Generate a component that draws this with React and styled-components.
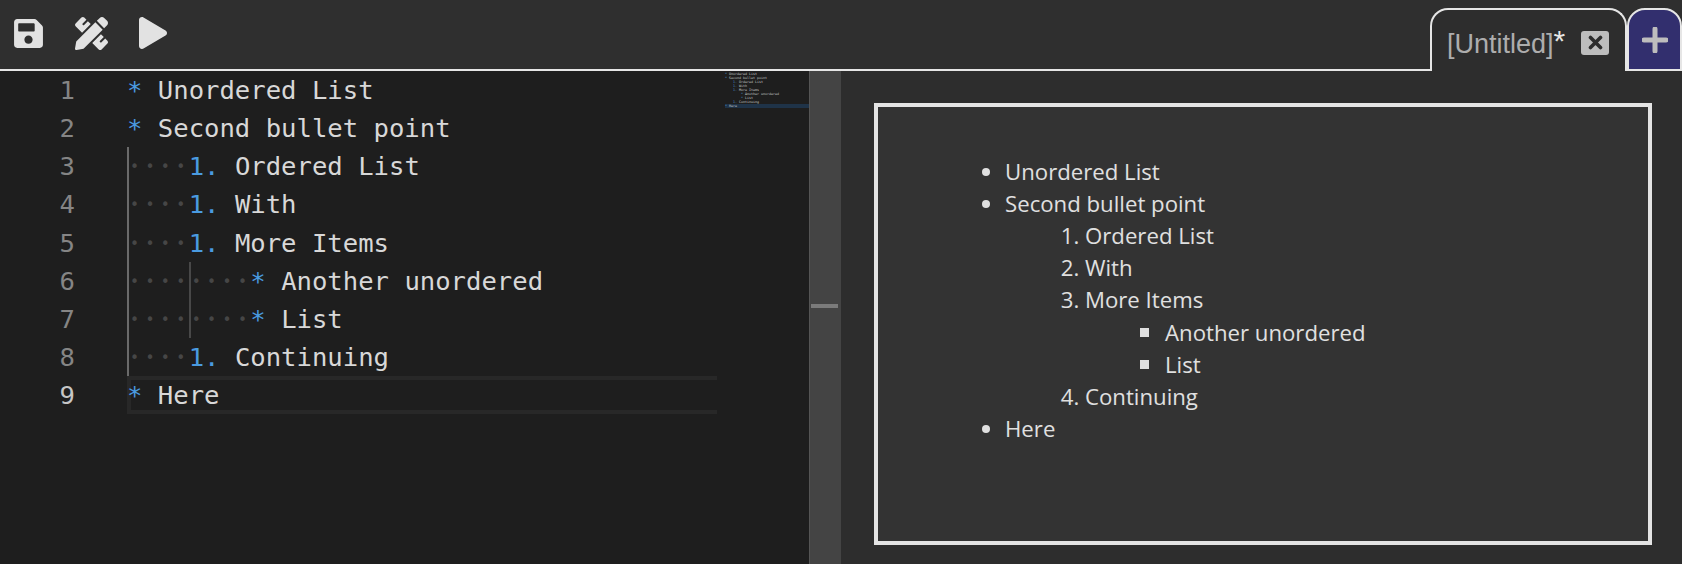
import React from "react";
import styled, { createGlobalStyle } from "styled-components";
import { FaSave, FaPencilRuler, FaPlay } from "react-icons/fa";

const Global = createGlobalStyle`
  html, body { margin: 0; padding: 0; background: #2d2d2d; overflow: hidden; }
`;
const Page = styled.div`
  width: 1682px; height: 564px; display: flex; flex-direction: column; overflow: hidden;
`;
const TopBar = styled.header`
  height: 71px; flex: none; box-sizing: border-box; background: #2f2f2f;
  display: flex; justify-content: space-between; align-items: flex-end;
`;
const Tools = styled.div`
  align-self: stretch; flex: 1; height: 69px; box-sizing: content-box; border-bottom: 2px solid #e6e6e6;
  display: flex; align-items: center; gap: 29.5px; padding-left: 12px; color: #e2e2e2;
  svg { display: block; margin-top: -3px; }
`;
const Tabs = styled.div`
  display: flex; align-items: flex-end; height: 63px;
`;
const Tab = styled.div`
  width: 197px; height: 63px; box-sizing: border-box; border: 2px solid #e6e6e6; border-bottom: none;
  border-radius: 18px 18px 0 0; background: #2d2d2d;
  display: flex; align-items: center; padding: 4px 16px 0 15px; gap: 14px;
  font: 27px/1 "Liberation Sans", Arial, sans-serif; color: #adadad;
`;
const TabTitle = styled.span`
  white-space: nowrap; flex: 1; margin-top: -2px;
`;
const Star = styled.span`
  color: #e6e6e6; font-size: 30px; vertical-align: 2px;
`;
const CloseBtn = styled.span`
  width: 28px; height: 24px; background: #bdbdbd; border-radius: 3px; flex: none;
  display: flex; align-items: center; justify-content: center;
`;
const AddTab = styled.div`
  width: 55px; height: 63px; box-sizing: border-box; border: 2px solid #e6e6e6;
  border-radius: 18px 18px 0 0; background: #322f6e;
  display: flex; align-items: center; justify-content: center;
`;
const Body = styled.main`
  flex: 1; display: flex; min-height: 0;
`;
const Editor = styled.section`
  width: 809px; flex: none; background: #1e1e1e; display: flex;
`;
const Gutter = styled.div`
  width: 127px; flex: none; box-sizing: border-box; padding-right: 52px; text-align: right;
`;
const LineNo = styled.div`
  height: 38.125px; font: 25.6px/38px "DejaVu Sans Mono", monospace;
  color: ${p => (p.$active ? "#c6c6c6" : "#858585")};
`;
const Code = styled.div`
  width: 590px; flex: none;
  font: 25.6px/38px "DejaVu Sans Mono", monospace; color: #d8d8d8; white-space: pre;
`;
const Line = styled.div`
  height: 38.125px; box-sizing: border-box;
  ${p => p.$current && `
    border: solid #282828; border-width: 4px 0 4px 4px;
    line-height: 30px; text-indent: -4px;
  `}
`;
const Guide = styled.div`
  background: linear-gradient(#6a6a6a, #6a6a6a) 0 0 / 2px 100% no-repeat;
`;
const NestedGuide = styled.div`
  background: linear-gradient(#484848, #484848) 62px 0 / 2px 100% no-repeat;
`;
const Mark = styled.span`
  color: #4a9be0;
`;
const Dots = styled.span`
  color: #464646; font-size: 15px; letter-spacing: 6.38px; vertical-align: 3px;
  padding-left: 3px; margin-right: -3px;
`;
const Minimap = styled.div`
  flex: 1; margin-left: 8px; padding-top: 1px; font: 3.33px/4px "DejaVu Sans Mono", monospace; color: #c8c8c8; white-space: pre;
`;
const MiniLine = styled.div`
  height: 4px; background: ${p => (p.$current ? "#1f3348" : "transparent")};
`;
const MiniMark = styled.span`
  color: #4a90d0;
`;
const Splitter = styled.div`
  width: 32px; flex: none; box-sizing: border-box; background: #444; border-left: 1px solid #555;
  display: flex; flex-direction: column; padding-top: 233px; padding-left: 1px;
`;
const Handle = styled.div`
  width: 27px; height: 4px; background: #7b7b7b;
`;
const Preview = styled.section`
  flex: 1; padding: 32px 30px 19px 33px; background: #2d2d2d; display: flex;
`;
const Document = styled.article`
  flex: 1; box-sizing: border-box; border: 4px solid #e4e4e4; background: #333;
  padding: 48.5px 0 0 99px;
  font: 22.2px/32.2px "Open Sans", sans-serif; color: #e0e0e0;
`;
const Bullets = styled.ul`
  margin: 0; padding: 0 0 0 28px; list-style: disc;
`;
const Numbers = styled.ol`
  margin: 0; padding: 0 0 0 80px;
`;
const Squares = styled.ul`
  margin: 0; padding: 0 0 0 80px; list-style: none;
`;
const SquareItem = styled.li`
  position: relative;
  &::before {
    content: ""; position: absolute; left: -25px; top: 11px;
    width: 9px; height: 9px; background: #e0e0e0;
  }
`;

const Ln = ({ dots, mark, text, current }) => (
  <Line $current={current}>
    {dots && <Dots>{dots}</Dots>}
    <Mark>{mark}</Mark>{" " + text}
  </Line>
);

const mini = [
  ["", "*", "Unordered List"],
  ["", "*", "Second bullet point"],
  ["    ", "1.", "Ordered List"],
  ["    ", "1.", "With"],
  ["    ", "1.", "More Items"],
  ["        ", "*", "Another unordered"],
  ["        ", "*", "List"],
  ["    ", "1.", "Continuing"],
  ["", "*", "Here"],
];

export default function App() {
  return (
    <Page>
      <Global />
      <TopBar>
        <Tools>
          <FaSave size={33} />
          <FaPencilRuler size={33} />
          <FaPlay size={32} />
        </Tools>
        <Tabs>
          <Tab>
            <TabTitle>[Untitled]<Star>*</Star></TabTitle>
            <CloseBtn>
              <svg width="15" height="15" viewBox="0 0 15 15">
                <path d="M2.5 2.5 12.5 12.5M12.5 2.5 2.5 12.5" stroke="#2d2d2d" strokeWidth="3.6" strokeLinecap="round" />
              </svg>
            </CloseBtn>
          </Tab>
          <AddTab>
            <svg width="26" height="26" viewBox="0 0 26 26">
              <path d="M13 2V24M2 13H24" stroke="#bdbdbd" strokeWidth="5" strokeLinecap="round" />
            </svg>
          </AddTab>
        </Tabs>
      </TopBar>
      <Body>
        <Editor>
          <Gutter>
            {[1, 2, 3, 4, 5, 6, 7, 8, 9].map(n => (
              <LineNo key={n} $active={n === 9}>{n}</LineNo>
            ))}
          </Gutter>
          <Code>
            <Ln mark="*" text="Unordered List" />
            <Ln mark="*" text="Second bullet point" />
            <Guide>
              <Ln dots="••••" mark="1." text="Ordered List" />
              <Ln dots="••••" mark="1." text="With" />
              <Ln dots="••••" mark="1." text="More Items" />
              <NestedGuide>
                <Ln dots="••••••••" mark="*" text="Another unordered" />
                <Ln dots="••••••••" mark="*" text="List" />
              </NestedGuide>
              <Ln dots="••••" mark="1." text="Continuing" />
            </Guide>
            <Ln mark="*" text="Here" current />
          </Code>
          <Minimap>
            {mini.map(([d, m, t], i) => (
              <MiniLine key={i} $current={i === 8}>
                {d}<MiniMark>{m}</MiniMark>{" " + t}
              </MiniLine>
            ))}
          </Minimap>
        </Editor>
        <Splitter><Handle /></Splitter>
        <Preview>
          <Document>
            <Bullets>
              <li>Unordered List</li>
              <li>
                Second bullet point
                <Numbers>
                  <li>Ordered List</li>
                  <li>With</li>
                  <li>
                    More Items
                    <Squares>
                      <SquareItem>Another unordered</SquareItem>
                      <SquareItem>List</SquareItem>
                    </Squares>
                  </li>
                  <li>Continuing</li>
                </Numbers>
              </li>
              <li>Here</li>
            </Bullets>
          </Document>
        </Preview>
      </Body>
    </Page>
  );
}
